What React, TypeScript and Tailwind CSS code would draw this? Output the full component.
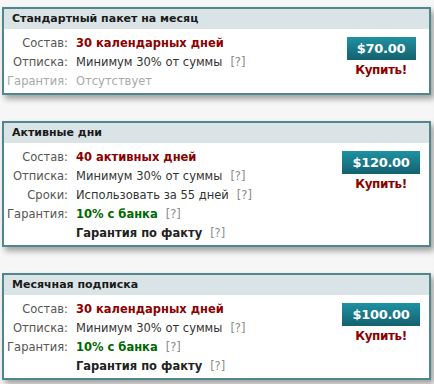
import React from 'react';

type Row = {
  label?: string;
  value: string;
  tone?: 'red' | 'plain' | 'muted' | 'green' | 'bold';
  hint?: boolean;
};

type Plan = {
  title: string;
  price: string;
  rows: Row[];
};

const plans: Plan[] = [
  {
    title: 'Стандартный пакет на месяц',
    price: '$70.00',
    rows: [
      { label: 'Состав:', value: '30 календарных дней', tone: 'red' },
      { label: 'Отписка:', value: 'Минимум 30% от суммы', tone: 'plain', hint: true },
      { label: 'Гарантия:', value: 'Отсутствует', tone: 'muted' },
    ],
  },
  {
    title: 'Активные дни',
    price: '$120.00',
    rows: [
      { label: 'Состав:', value: '40 активных дней', tone: 'red' },
      { label: 'Отписка:', value: 'Минимум 30% от суммы', tone: 'plain', hint: true },
      { label: 'Сроки:', value: 'Использовать за 55 дней', tone: 'plain', hint: true },
      { label: 'Гарантия:', value: '10% с банка', tone: 'green', hint: true },
      { value: 'Гарантия по факту', tone: 'bold', hint: true },
    ],
  },
  {
    title: 'Месячная подписка',
    price: '$100.00',
    rows: [
      { label: 'Состав:', value: '30 календарных дней', tone: 'red' },
      { label: 'Отписка:', value: 'Минимум 30% от суммы', tone: 'plain', hint: true },
      { label: 'Гарантия:', value: '10% с банка', tone: 'green', hint: true },
      { value: 'Гарантия по факту', tone: 'bold', hint: true },
    ],
  },
];

const toneClass: Record<string, string> = {
  red: 'text-[#8b0000] font-bold',
  plain: 'text-[#333333]',
  muted: 'text-[#a8a8a8]',
  green: 'text-[#006600] font-bold',
  bold: 'text-[#222222] font-bold',
};

function PlanCard({ plan }: { plan: Plan }) {
  return (
    <div className="border-2 border-[#4f878c] bg-white shadow-[3px_4px_6px_rgba(0,0,0,0.35)]">
      {/* Заголовок */}
      <div className="h-[20px] bg-[#dae4e6] pl-[8px] text-[11px] leading-[20px] font-bold text-[#1a1a1a]">
        {plan.title}
      </div>

      <div className="flex pt-[5px] pb-[2px]">
        <div className="flex-1">
          {plan.rows.map((row, i) => (
            <div key={i} className="flex h-[19px] items-center text-[11.5px]">
              <span
                className={`w-[64px] text-right ${row.tone === 'muted' ? 'text-[#a8a8a8]' : 'text-[#555555]'}`}
              >
                {row.label}
              </span>
              <span className={`ml-[8px] ${toneClass[row.tone ?? 'plain']}`}>{row.value}</span>
              {row.hint && <span className="ml-[8px] text-[#8a8a8a]">[?]</span>}
            </div>
          ))}
        </div>

        {/* Цена */}
        <div className="flex w-[96px] flex-col items-center pt-[3px]">
          <button className="h-[23px] min-w-[69px] bg-gradient-to-b from-[#1f92a3] to-[#14616e] px-[10px] text-[13px] font-bold tracking-[-0.3px] text-white">
            {plan.price}
          </button>
          <span className="mt-[3px] text-[12px] leading-[14px] font-bold tracking-[-0.4px] text-[#8b0000]">
            Купить!
          </span>
        </div>
      </div>
    </div>
  );
}

export default function App() {
  return (
    <div
      className="flex min-h-screen flex-col gap-[26px] bg-[#f6f6f6] pt-[7px] pr-[3px] pl-[2px]"
      style={{ fontFamily: '"DejaVu Sans", Verdana, sans-serif' }}
    >
      {plans.map((p) => (
        <PlanCard key={p.title} plan={p} />
      ))}
    </div>
  );
}
